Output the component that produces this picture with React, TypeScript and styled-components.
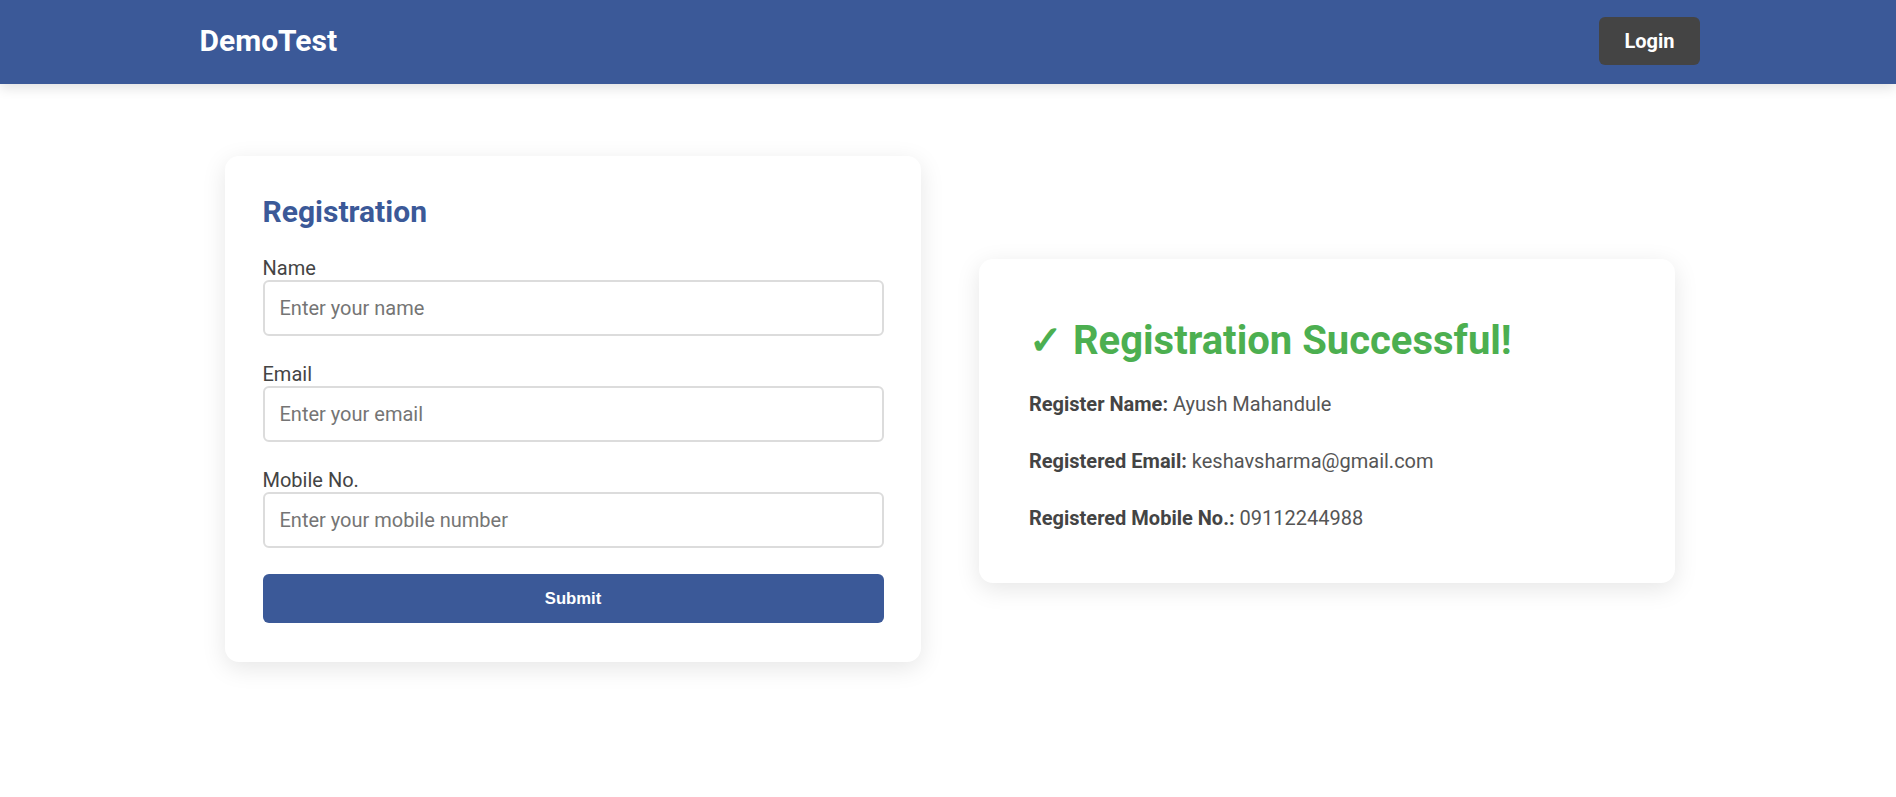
import React from "react";
import styled, { createGlobalStyle } from "styled-components";

const GlobalStyle = createGlobalStyle`
  * { box-sizing: border-box; }
  html, body { margin: 0; padding: 0; background: #ffffff; }
  body { font-family: Roboto, "Liberation Sans", Arial, sans-serif; color: #444; }
`;

const Header = styled.header`
  height: 84px;
  background: #3b5998;
  box-shadow: 0 4px 12px rgba(0, 0, 0, 0.12);
  display: flex;
  justify-content: center;
  padding-left: 3px;
`;

const HeaderInner = styled.div`
  width: 1500px;
  display: flex;
  align-items: center;
  justify-content: space-between;
  padding-bottom: 3px;
`;

const Brand = styled.div`
  font-size: 30px;
  font-weight: 700;
  color: #ffffff;
  line-height: 35px;
`;

const LoginButton = styled.button`
  height: 48px;
  padding: 0 25px;
  border: none;
  border-radius: 6px;
  background: #444444;
  color: #ffffff;
  font-family: Roboto, "Liberation Sans", Arial, sans-serif;
  font-size: 20px;
  font-weight: 700;
  cursor: pointer;
`;

const Main = styled.main`
  display: flex;
  justify-content: center;
  align-items: flex-start;
  gap: 58px;
  padding: 72px 0 80px 4px;
`;

const Card = styled.section<{ $top?: number; $pad: string }>`
  width: 696px;
  background: #ffffff;
  border-radius: 14px;
  box-shadow: 0 6px 24px rgba(0, 0, 0, 0.1);
  padding: ${(p) => p.$pad};
  margin-top: ${(p) => p.$top ?? 0}px;
`;

const FormTitle = styled.h2`
  margin: 0 0 28px;
  font-size: 30px;
  line-height: 35px;
  font-weight: 700;
  color: #3b5998;
`;

const Field = styled.div<{ $last?: boolean }>`
  display: flex;
  flex-direction: column;
  margin-bottom: ${(p) => (p.$last ? 26 : 27.5)}px;
`;

const Label = styled.label`
  font-size: 20px;
  line-height: 22.5px;
  color: #444;
`;

const Input = styled.input`
  width: 100%;
  height: 56px;
  padding: 0 15px;
  border: 2px solid #dcdcdc;
  border-radius: 6px;
  font-family: Roboto, "Liberation Sans", Arial, sans-serif;
  font-size: 20px;
  color: #333;
  outline: none;
  &::placeholder {
    color: #757575;
  }
`;

const SubmitButton = styled.button`
  width: 100%;
  height: 49.5px;
  border: none;
  border-radius: 6px;
  background: #3b5998;
  color: #ffffff;
  font-family: "Liberation Sans", Arial, sans-serif;
  font-size: 16.67px;
  font-weight: 700;
  cursor: pointer;
`;

const SuccessTitle = styled.h2`
  margin: 0 0 29px;
  font-size: 40px;
  line-height: 47px;
  font-weight: 700;
  color: #4caf50;
  white-space: nowrap;
`;

const InfoList = styled.div`
  display: flex;
  flex-direction: column;
  gap: 34.25px;
`;

const InfoLine = styled.p`
  margin: 0;
  font-size: 20px;
  line-height: 22.5px;
  color: #555;
  strong {
    color: #444;
    font-weight: 700;
  }
`;

export default function App() {
  return (
    <>
      <GlobalStyle />
      <Header>
        <HeaderInner>
          <Brand>DemoTest</Brand>
          <LoginButton>Login</LoginButton>
        </HeaderInner>
      </Header>
      <Main>
        <Card $pad="38.4px 37.5px">
          <FormTitle>Registration</FormTitle>
          <form onSubmit={(e) => e.preventDefault()}>
            <Field>
              <Label htmlFor="name">Name</Label>
              <Input id="name" type="text" placeholder="Enter your name" />
            </Field>
            <Field>
              <Label htmlFor="email">Email</Label>
              <Input id="email" type="email" placeholder="Enter your email" />
            </Field>
            <Field $last>
              <Label htmlFor="mobile">Mobile No.</Label>
              <Input id="mobile" type="tel" placeholder="Enter your mobile number" />
            </Field>
            <SubmitButton type="submit">Submit</SubmitButton>
          </form>
        </Card>
        <Card $top={103} $pad="58px 50px 54px">
          <SuccessTitle>✓ Registration Successful!</SuccessTitle>
          <InfoList>
            <InfoLine>
              <strong>Register Name:</strong> Ayush Mahandule
            </InfoLine>
            <InfoLine>
              <strong>Registered Email:</strong> keshavsharma@gmail.com
            </InfoLine>
            <InfoLine>
              <strong>Registered Mobile No.:</strong> 09112244988
            </InfoLine>
          </InfoList>
        </Card>
      </Main>
    </>
  );
}
